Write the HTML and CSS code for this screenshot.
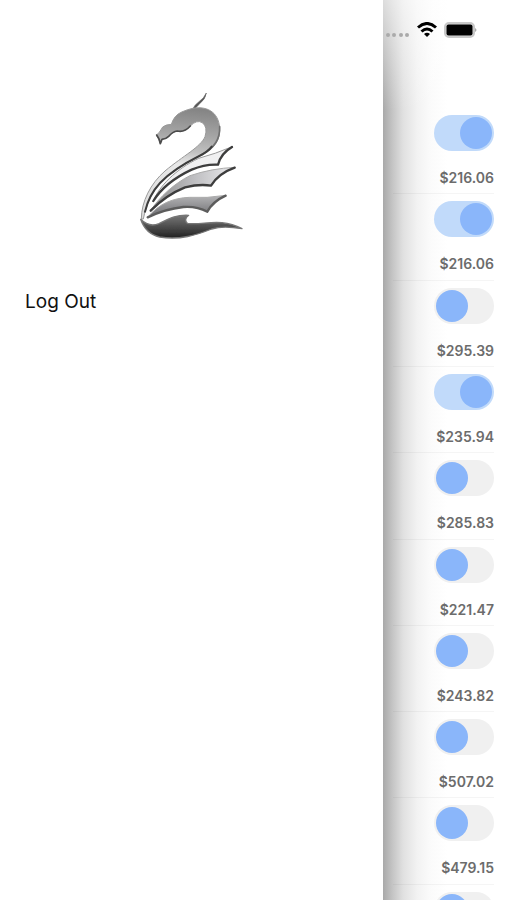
FILE: index.html
```html
<!DOCTYPE html>
<html lang="en">
<head>
<meta charset="utf-8">
<meta name="viewport" content="width=device-width, initial-scale=1">
<title>Menu</title>
<link rel="stylesheet" href="styles.css">
</head>
<body>
<div class="screen">
  <aside class="drawer">
    <svg class="logo" viewBox="0 0 360 480" role="img" aria-label="Dragon">
      <defs>
        <linearGradient id="neck" gradientUnits="userSpaceOnUse" x1="150" y1="70" x2="120" y2="400">
          <stop offset="0" stop-color="#858585"/>
          <stop offset=".22" stop-color="#a4a4a4"/>
          <stop offset=".38" stop-color="#c0c0c0"/>
          <stop offset=".5" stop-color="#e8e8e8"/>
          <stop offset="1" stop-color="#ddd"/>
        </linearGradient>
        <linearGradient id="wing" x1="0" y1="0" x2="1" y2="0">
          <stop offset="0" stop-color="#888"/>
          <stop offset=".5" stop-color="#bdbdc0"/>
          <stop offset="1" stop-color="#ececee"/>
        </linearGradient>
        <linearGradient id="lowwing" x1="0" y1="0" x2="0" y2="1">
          <stop offset="0" stop-color="#b4b4b6"/>
          <stop offset="1" stop-color="#6c6c70"/>
        </linearGradient>
        <linearGradient id="base" x1="0" y1="0" x2="0" y2="1">
          <stop offset="0" stop-color="#777"/>
          <stop offset=".6" stop-color="#444"/>
          <stop offset="1" stop-color="#222"/>
        </linearGradient>
        <filter id="soft" x="-5%" y="-5%" width="110%" height="110%"><feGaussianBlur stdDeviation="2"/></filter>
      </defs>
      <g filter="url(#soft)" stroke-linejoin="round" stroke-linecap="round">
        <path fill="#555" stroke="#666" stroke-width="2" d="M188 72Q194 59 207 50Q222 40 229 24Q227 42 209 56L194 72Z"/>
        <path fill="url(#neck)" stroke="#999" stroke-width="3" d="M80 150Q88 145 98 126Q106 119 124 118Q132 91 155 81Q173 73 188 70C238 61 270 88 269 137C268 181 235 200 208 212C160 237 120 262 90 294C65 322 48 360 40 402L34 402C34 350 62 295 105 258C160 212 212 186 225 155Q234 126 217 113Q200 103 181 123Q163 143 142 137Q128 140 116 154Q105 161 96 162L91 176L86 162Z"/>
        <path fill="none" stroke="#4c4c4c" stroke-width="5" d="M80 150L87 162L91 176L96 163Q108 162 116 154Q128 140 142 138Q163 143 181 123"/>
        <path fill="none" stroke="#707070" stroke-width="5" d="M269 125C271 165 248 192 215 209"/>
        <path fill="none" stroke="#3d3d3d" stroke-width="6" d="M245 185C235 199 222 206 208 213C160 237 120 262 90 294C68 318 52 350 45 380"/>
        <path fill="#f0f0f1" stroke="#999" stroke-width="3" d="M70 348C86 305 138 252 206 220Q255 207 309 184Q272 206 264 239Q225 237 185 254C138 276 95 308 70 348Z"/>
        <path fill="url(#wing)" stroke="#aaa" stroke-width="3" d="M62 377C88 335 135 294 180 272Q245 250 316 247Q266 265 243 302Q210 296 165 307Q108 330 62 377Z"/>
        <path fill="url(#lowwing)" stroke="#aaa" stroke-width="3" d="M53 397C87 355 130 339 178 337Q230 340 288 331Q249 349 232 380Q200 363 160 366Q105 372 53 397Z"/>
        <g fill="none" stroke="#3d3d3d" stroke-width="7">
          <path d="M306 186Q272 206 264 239Q225 237 185 254C138 276 95 308 70 348"/>
          <path d="M314 248Q266 265 243 302Q210 296 165 307Q108 330 62 377"/>
          <path stroke="#5c5c5c" d="M287 332Q249 349 232 380Q200 363 160 366Q105 372 53 397"/>
        </g>
        <path fill="url(#base)" stroke="#777" stroke-width="4" d="M32 403Q57 428 87 416C113 404 132 389 176 391Q160 403 172 415C224 421 270 397 336 431Q278 421 245 432C200 450 150 466 89 456Q47 447 32 403Z"/>
      </g>
    </svg>
    <nav><a class="link" href="#logout">Log Out</a></nav>
  </aside>
  <main class="page">
    <div class="status">
      <svg class="dots" viewBox="0 0 24 4" aria-hidden="true"><g fill="#aaa"><circle cx="2" cy="2" r="2"/><circle cx="8" cy="2" r="2"/><circle cx="15" cy="2" r="2"/><circle cx="21" cy="2" r="2"/></g></svg>
      <svg class="wifi" viewBox="0 0 20 15" aria-hidden="true"><g fill="none" stroke="#000" stroke-width="3"><path d="M1 5.500Q10-2.500 19 5.500"/><path d="M4.500 9.500Q10 4.500 15.500 9.500"/></g><path d="M7 12Q10 9.500 13 12L10 15Z"/></svg>
      <svg class="battery" viewBox="0 0 34 16" aria-hidden="true"><rect x="1" y="1" width="29" height="14" rx="4" fill="#ddd" stroke="#c8c8c8" stroke-width="2"/><rect x="2.500" y="2.500" width="26" height="11" rx="2"/><path fill="#aaa" d="M31 6Q34 8 31 10Z"/></svg>
    </div>
    <ul class="rows">
      <li class="row"><input class="switch" type="checkbox" role="switch" aria-label="$216.06" checked><span>$216.06</span></li>
      <li class="row"><input class="switch" type="checkbox" role="switch" aria-label="$216.06" checked><span>$216.06</span></li>
      <li class="row"><input class="switch" type="checkbox" role="switch" aria-label="$295.39"><span>$295.39</span></li>
      <li class="row"><input class="switch" type="checkbox" role="switch" aria-label="$235.94" checked><span>$235.94</span></li>
      <li class="row"><input class="switch" type="checkbox" role="switch" aria-label="$285.83"><span>$285.83</span></li>
      <li class="row"><input class="switch" type="checkbox" role="switch" aria-label="$221.47"><span>$221.47</span></li>
      <li class="row"><input class="switch" type="checkbox" role="switch" aria-label="$243.82"><span>$243.82</span></li>
      <li class="row"><input class="switch" type="checkbox" role="switch" aria-label="$507.02"><span>$507.02</span></li>
      <li class="row"><input class="switch" type="checkbox" role="switch" aria-label="$479.15"><span>$479.15</span></li>
      <li class="row"><input class="switch" type="checkbox" role="switch" aria-label="Next item"></li>
    </ul>
  </main>
</div>
</body>
</html>
```
FILE: styles.css
```css
* { box-sizing: border-box; }

body {
  margin: 0;
  background: #fff;
  color: #111;
  font-family: Inter, "Liberation Sans", sans-serif;
}

.screen {
  display: grid;
  grid-template-columns: minmax(0, 1fr) 124px;
  height: 100vh;
  overflow: hidden;
}

.drawer {
  display: flex;
  flex-direction: column;
  padding: 85px 28px 24px 25px;
  background: #fff;
}

.logo {
  width: 120px;
  height: 160px;
  align-self: center;
}

.drawer nav { margin-top: 45px; }

.link {
  color: #111;
  font-size: 19px;
  line-height: 24px;
  text-decoration: none;
}

.page {
  padding-right: 13px;
  background:
    linear-gradient(to bottom, rgba(255, 255, 255, 0.6), rgba(255, 255, 255, 0) 110px),
    linear-gradient(to right, #a9a9a9, #c6c6c6 10px, #e0e0e0 20px, #f2f2f2 34px, #fbfbfb 48px, #fff 64px);
}

.status {
  display: flex;
  align-items: center;
  gap: 7px;
  height: 59px;
  padding-left: 3px;
}

.dots { width: 24px; height: 4px; margin-top: 10px; }
.wifi { width: 20px; height: 15px; }
.battery { width: 34px; height: 16px; }

.rows {
  display: grid;
  grid-template-rows: repeat(10, 1fr);
  height: 863px;
  margin: 49px 0 0;
  padding: 0;
  list-style: none;
}

.row {
  display: flex;
  flex-direction: column;
  align-items: flex-end;
  gap: 17px;
  margin-left: 10px;
  padding-top: 7px;
  border-bottom: 1px solid rgba(0, 0, 0, 0.04);
  color: #6c6c6c;
  font-size: 14px;
  font-weight: 600;
  line-height: 20px;
}

.switch {
  appearance: none;
  display: flex;
  flex: none;
  width: 60px;
  height: 36px;
  margin: 0;
  padding: 2px;
  border-radius: 18px;
  background: #f0f0f0;
}

.switch::before {
  content: "";
  width: 32px;
  height: 32px;
  border-radius: 50%;
  background: #8ab6fa;
}

.switch:checked {
  justify-content: flex-end;
  background: #c1dafa;
}
```
